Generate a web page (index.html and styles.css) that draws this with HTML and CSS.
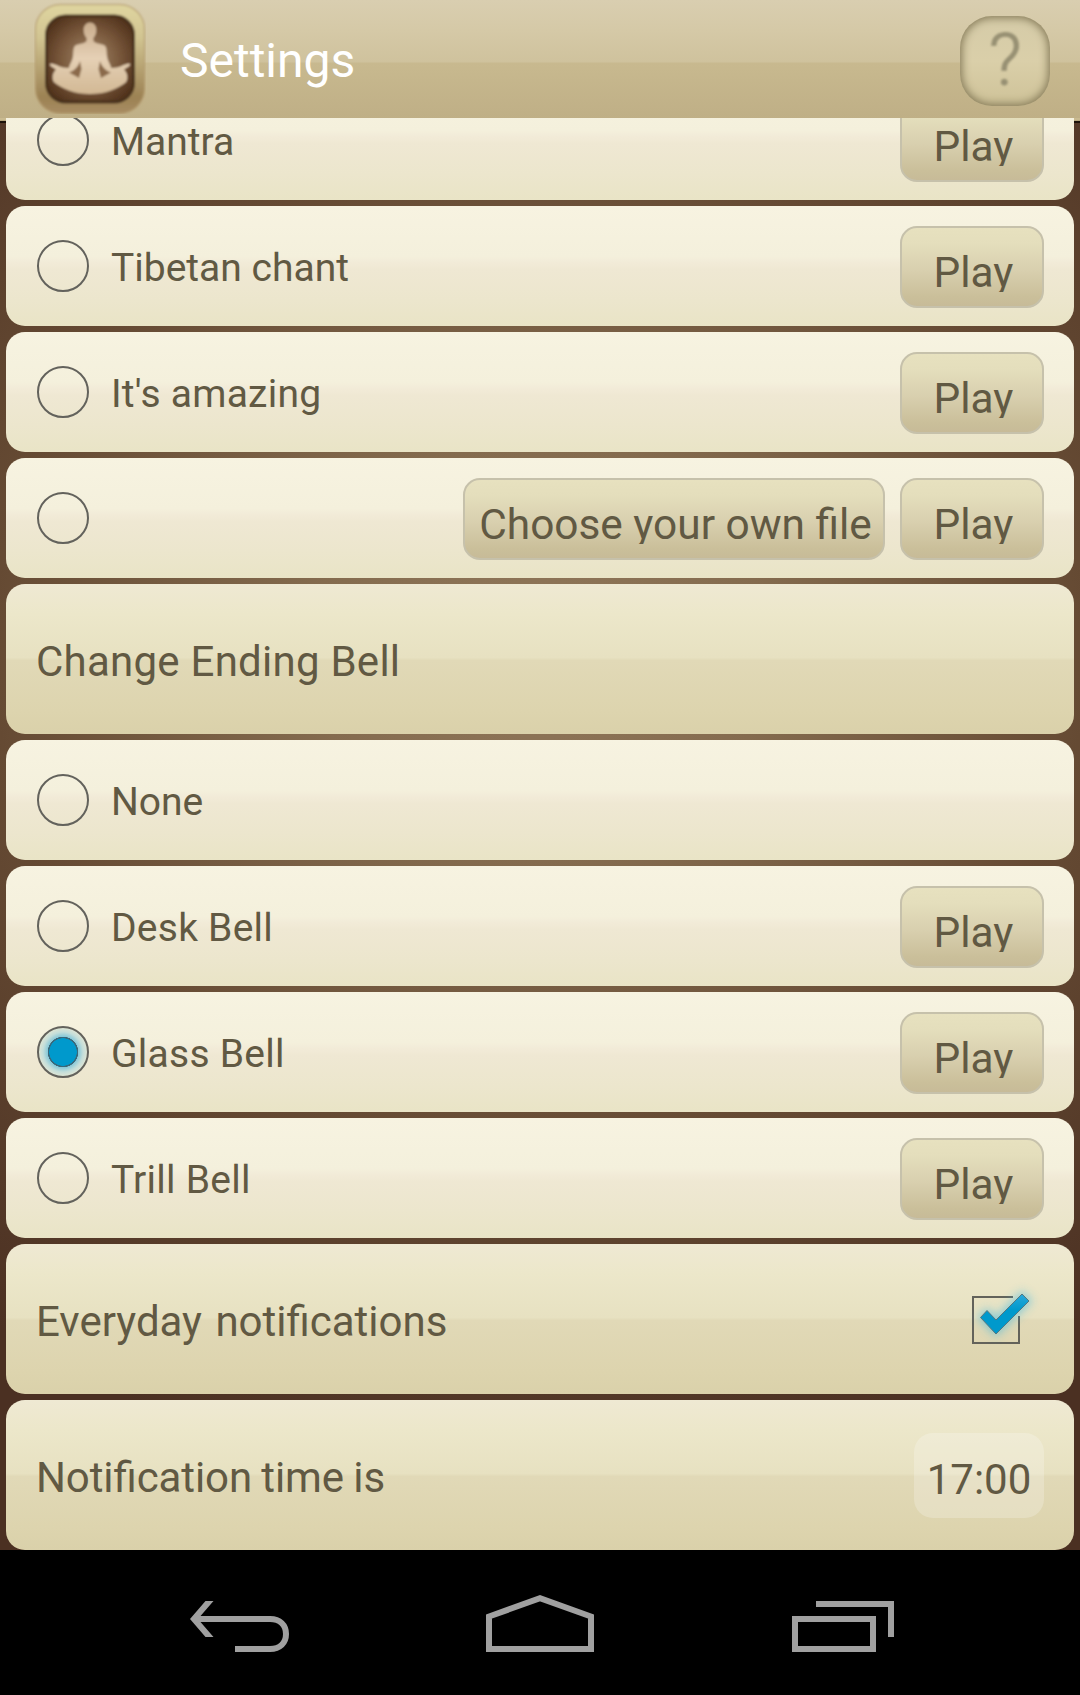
FILE: index.html
```html
<!DOCTYPE html>
<html lang="en">
<head>
<meta charset="utf-8">
<title>Settings</title>
<link rel="stylesheet" href="styles.css">
</head>
<body>
<div class="screen">
  <header class="bar">
    <svg class="logo" viewBox="0 0 112 113" aria-hidden="true">
      <defs>
        <linearGradient id="frame" x1="0" y1="0" x2="0" y2="1"><stop offset="0" stop-color="#dfd5a0"/><stop offset=".3" stop-color="#d2c592"/><stop offset=".85" stop-color="#9c8254"/><stop offset="1" stop-color="#a88c62"/></linearGradient>
        <radialGradient id="inside" cx=".5" cy=".5" r=".65"><stop offset="0" stop-color="#a58a6a"/><stop offset=".55" stop-color="#765539"/><stop offset="1" stop-color="#482a15"/></radialGradient>
        <linearGradient id="skin" x1="0" y1="0" x2="0" y2="1"><stop offset="0" stop-color="#c9ac8c"/><stop offset=".5" stop-color="#e5d0b5"/><stop offset="1" stop-color="#d2b894"/></linearGradient>
        <filter id="soft"><feGaussianBlur stdDeviation=".9"/></filter>
      </defs>
      <g filter="url(#soft)">
        <rect x="1.500" y="3.500" width="109" height="109" rx="25" fill="url(#frame)" stroke="#b39a6c" stroke-opacity=".7" stroke-width="1.500"/>
        <rect x="12.500" y="15" width="87" height="86" rx="19" fill="url(#inside)" stroke="#4a321d" stroke-width="3"/>
        <path fill="url(#skin)" d="M56 21.500c4.200 0 6.600 3.800 6.300 8.200-.2 3.400-1.500 5.700-3 7.300l.3 3.500c3 2.500 8.400 2.400 11 4 2.200 1.600 2 6 2.300 10.500.5 5 3.600 8.500 4.300 12 4 .2 9-1.200 12.300-3l5-1.500 2 .8-1.500 2-5 3.200c3.600 3.500 4.300 9 2 12.800C83 88.500 71 93 56 93s-27-4.500-36-11.700c-2.300-3.800-1.600-9.300 2-12.800l-5-3.200-1.500-2 2-.8 5 1.500c3.300 1.800 8.300 3.200 12.300 3 .7-3.500 3.800-7 4.300-12 .3-4.500.1-8.900 2.300-10.500 2.600-1.600 8-1.500 11-4l.3-3.500c-1.500-1.600-2.800-3.900-3-7.300-.3-4.400 2.100-8.200 6.300-8.200z"/>
        <path fill="#8b6b4c" d="M46 60l1.500 8-2.500 9-10-5.500c5.500-2 9.500-6 11-11.500zM66 60l-1.500 8 2.500 9 10-5.500c-5.500-2-9.500-6-11-11.500z"/>
      </g>
    </svg>
    <h1 class="title">Settings</h1>
    <button class="help" aria-label="Help"><span class="mark">?</span></button>
  </header>

  <main class="list">
    <div class="row"><i class="radio"></i><span class="label">Mantra</span><button class="btn"><span>Play</span></button></div>
    <div class="row"><i class="radio"></i><span class="label">Tibetan chant</span><button class="btn"><span>Play</span></button></div>
    <div class="row"><i class="radio"></i><span class="label spaced">It's amazing</span><button class="btn"><span>Play</span></button></div>
    <div class="row"><i class="radio"></i><span class="label"></span><button class="btn file"><span>Choose your own file</span></button><button class="btn"><span>Play</span></button></div>
    <div class="row section"><span class="label spaced">Change Ending Bell</span></div>
    <div class="row"><i class="radio"></i><span class="label">None</span></div>
    <div class="row"><i class="radio"></i><span class="label spaced">Desk Bell</span><button class="btn"><span>Play</span></button></div>
    <div class="row"><i class="radio checked"></i><span class="label spaced">Glass Bell</span><button class="btn"><span>Play</span></button></div>
    <div class="row"><i class="radio"></i><span class="label spaced">Trill Bell</span><button class="btn"><span>Play</span></button></div>
    <div class="row section"><span class="label wide">Everyday notifications</span>
      <svg class="check" viewBox="0 0 96 96" aria-hidden="true">
        <defs>
          <filter id="glow" x="-50%" y="-50%" width="200%" height="200%"><feGaussianBlur stdDeviation="5"/></filter>
          <linearGradient id="tick" x1="0" y1="0" x2="0" y2="1"><stop offset="0" stop-color="#2aa8da"/><stop offset=".4" stop-color="#0099cc"/><stop offset="1" stop-color="#0099cc"/></linearGradient>
        </defs>
        <path d="M65 25H25V71H71V44" fill="none" stroke="#63625a" stroke-width="2"/>
        <path d="M32.500 45.500l6.500-6.500 9 9 26-26 7 7-33 32.500z" fill="#33b5e5" stroke="#33b5e5" stroke-width="5" opacity=".5" filter="url(#glow)"/>
        <path d="M32.500 45.500l6.500-7 9 9.500 26-26 7 7-33 33z" fill="url(#tick)" stroke="#55777f" stroke-width="1"/>
      </svg>
    </div>
    <div class="row section"><span class="label tight">Notification time is</span><span class="time">17:00</span></div>
  </main>

  <nav class="nav">
    <svg viewBox="0 0 100 58" aria-hidden="true"><path class="solid" d="M0 22L15.500 4H23.500L10.500 19V25L23.500 40H15.500Z"/><path d="M6 22H80C90 22 96 28 96 37S90 52 80 52H45"/></svg>
    <svg viewBox="0 0 108 58" aria-hidden="true"><path d="M3 52V19.500L54 1.200 105 19.500V52Z"/></svg>
    <svg viewBox="0 0 102 58" aria-hidden="true"><path d="M3 22H81V52H3ZM24 7H99V40"/></svg>
  </nav>
</div>
</body>
</html>
```
FILE: styles.css
```css
* { box-sizing: border-box; }

body {
  margin: 0;
  font-family: Roboto, "Noto Sans", sans-serif;
  color: #615943;
}

.screen {
  display: flex;
  flex-direction: column;
  width: 1080px;
  height: 1695px;
  overflow: hidden;
  background: radial-gradient(ellipse 760px 700px at 540px 650px, #90775a 0%, #846b4e 30%, #654a33 72%, #4b3022 120%);
}

.bar {
  display: flex;
  align-items: flex-start;
  flex: none;
  height: 118px;
  padding-left: 34px;
  padding-right: 30px;
  background: linear-gradient(#d9ceb0 0, #d5c9a7 30px, #cfc29d 62px, #c8b98f 63px, #bfaf86 118px);
}
.logo { width: 112px; height: 113px; margin-top: 1px; }
.title {
  flex: 1;
  margin: 33px 0 0 34px;
  font-size: 48px;
  line-height: 56px;
  font-weight: 400;
  color: #fff;
}
.help {
  width: 90px;
  height: 90px;
  margin-top: 16px;
  padding: 0;
  border: 0;
  border-radius: 32px;
  background: linear-gradient(#d5cba8, #dacfa9 50%, #cec298);
  box-shadow: inset 0 0 9px 2px #857a58;
  color: #979073;
  font: 300 72px/88px Roboto, sans-serif;
}
.mark { display: block; filter: blur(1px); -webkit-text-stroke: 1px #979073; }

.list {
  display: flex;
  flex-direction: column;
  justify-content: flex-end;
  gap: 6px;
  flex: none;
  height: 1432px;
  padding: 0 6px;
  overflow: hidden;
  background: linear-gradient(#c9ba90 0 2px, #a3946c 3px, #1c120a 3px 5px, transparent 5px);
}
.row {
  display: flex;
  align-items: flex-start;
  flex: none;
  height: 120px;
  padding: 0 30px 0 31px;
  border-radius: 19px;
  background: linear-gradient(#f7f3e1, #f4f0dc 42%, #f2ebd8 47%, #efe8d3 53%, #ece6cd 78%, #e9e4c6);
}
.label { flex: 1; margin: 39px 0 0 22px; font-size: 39px; line-height: 46px; white-space: nowrap; }
.spaced { letter-spacing: .25px; }
.tight { word-spacing: -1px; letter-spacing: -.1px; font-feature-settings: "liga" 1; }
.wide { word-spacing: 3px; }
.radio {
  width: 52px;
  height: 52px;
  margin-top: 34px;
  border: 2px solid #63625c;
  border-radius: 50%;
}
.radio.checked {
  background: radial-gradient(circle at 50% 50%, #0099cc 0 13.500px, #39687a 14px 15px, #8ac9d8 15.500px, #c4deda 20px, #e3e6d3 25px);
}
.btn {
  flex: none;
  width: 144px;
  height: 82px;
  margin: 20px 0 0 15px;
  padding: 0 0 14px;
  border: 2px solid #c6c1ab;
  border-radius: 17px;
  background: linear-gradient(#e7e1bf, #e4debc 20%, #d8cfae 55%, #cabf9a 88%, #c7bb98);
  color: inherit;
  font: 400 42.400px/48px Roboto, sans-serif;
}
/* The label box is shorter than its line, so descenders are trimmed. */
.btn span { display: block; height: 64px; padding: 21px 0 0 3px; overflow: hidden; white-space: nowrap; }
.btn.file { width: 422px; }

.section {
  height: 150px;
  background: linear-gradient(#efe9d3, #ece7ca 20%, #e7e1c1 49%, #e1d9b7 51%, #ddd4ae 85%, #dad1aa);
}
.section .label { margin: 53px 0 0 -1px; font-size: 42px; line-height: 50px; }
.check { width: 96px; height: 96px; margin: 28px 0 0; }
.time {
  width: 130px;
  height: 85px;
  margin-top: 33px;
  border-radius: 19px;
  background: rgba(255, 255, 255, .22);
  font-size: 42px;
  line-height: 93px;
  text-align: center;
}

.nav {
  display: flex;
  flex: 1;
  justify-content: space-between;
  padding: 47px 186px 0 190px;
  background: #000;
}
.nav svg { height: 58px; overflow: visible; fill: none; stroke: #a0a0a0; stroke-width: 6; }
.nav svg:nth-child(2) { margin-right: 2px; }
.nav .solid { fill: #a0a0a0; stroke: none; }
```
